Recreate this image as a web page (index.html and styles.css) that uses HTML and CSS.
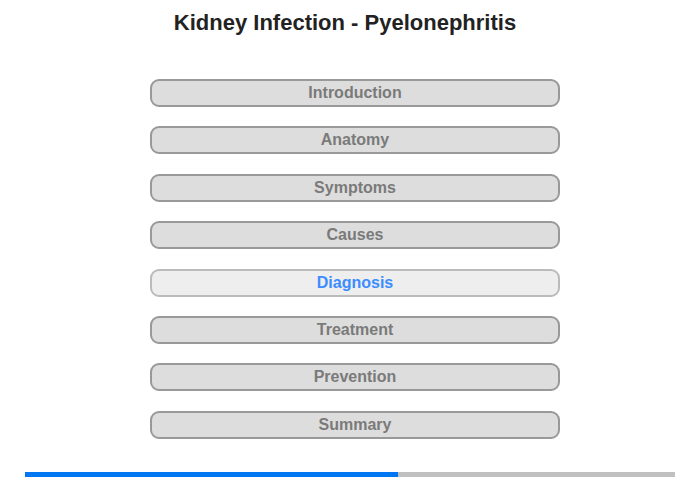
FILE: index.html
```html
<!DOCTYPE html>
<html>
<head>
<meta charset="utf-8">
<link rel="stylesheet" href="styles.css">
</head>
<body>
<div class="page">
  <h1 class="title">Kidney Infection - Pyelonephritis</h1>
  <nav class="menu">
    <div class="item">Introduction</div>
    <div class="item">Anatomy</div>
    <div class="item">Symptoms</div>
    <div class="item">Causes</div>
    <div class="item active">Diagnosis</div>
    <div class="item">Treatment</div>
    <div class="item">Prevention</div>
    <div class="item">Summary</div>
  </nav>
  <div class="progress"><div class="fill" style="width:57.4%"></div></div>
</div>
</body>
</html>
```

FILE: styles.css
```css
html, body {
  margin: 0;
  padding: 0;
  background: #fff;
}
.page {
  width: 700px;
  height: 480px;
  font-family: "Liberation Sans", Arial, sans-serif;
  display: flex;
  flex-direction: column;
}
.title {
  margin: 10px 0 0 0;
  font-size: 22px;
  line-height: 26px;
  font-weight: bold;
  color: #222;
  text-align: center;
  padding-right: 10px;
}
.menu {
  margin: 43px 0 0 150px;
  width: 410px;
  display: flex;
  flex-direction: column;
  gap: 19.4px;
}
.item {
  box-sizing: border-box;
  height: 28px;
  border: 2px solid #999;
  border-radius: 9px;
  background: #ddd;
  color: #7a7a7a;
  font-size: 16px;
  font-weight: bold;
  line-height: 24px;
  text-align: center;
}
.item.active {
  background: #eee;
  border-color: #bbb;
  color: #3b8cff;
}
.progress {
  margin: 33px 0 0 25px;
  width: 650px;
  height: 5px;
  background: #c0c0c0;
}
.fill {
  height: 100%;
  background: #0077f2;
}
```
